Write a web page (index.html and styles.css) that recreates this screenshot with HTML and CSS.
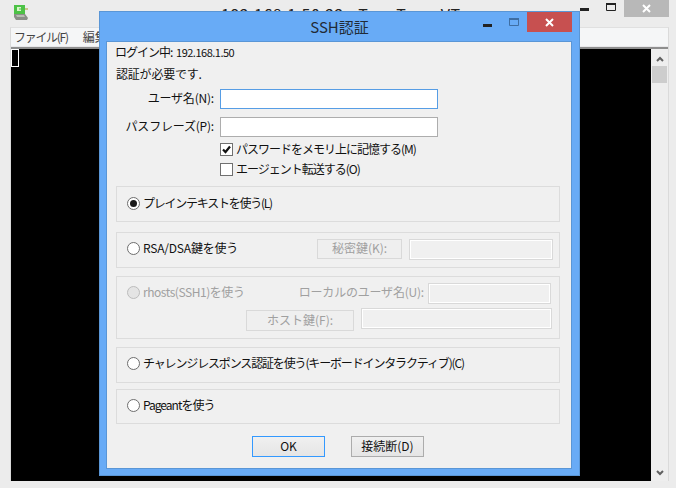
FILE: index.html
```html
<!DOCTYPE html>
<html lang="ja">
<head>
<meta charset="utf-8">
<title>SSH認証</title>
<link rel="stylesheet" href="styles.css">
</head>
<body>
<div class="desktop">
  <header class="term-titlebar">
    <svg class="app-icon" width="16" height="16" viewBox="0 0 16 16"><path d="M1 0h11v9H1z" fill="#4cc246"/><path d="M4 2h4v1.500H6v1h2V6H4z" fill="#d8f4c8"/><path d="M12 3h3v2h-3z" fill="#c9c48a"/><path d="M1 9h11l3 4-1 2H3l-2-3z" fill="#8a8f88"/><path d="M3 10h8l1 2H4z" fill="#b8bcb4"/></svg>
    <span class="term-title">192.168.1.50:22 - Tera Term VT</span>
    <div class="term-controls">
      <svg class="tc-min" width="9" height="3" viewBox="0 0 9 3"><rect width="9" height="3" fill="#222"/></svg>
      <svg class="tc-max" width="10" height="8" viewBox="0 0 10 8"><path d="M.5.5h9v7h-9z" fill="none" stroke="#222"/><rect x="0" y="0" width="10" height="2" fill="#222"/></svg>
      <div class="tc-close"><svg width="9" height="9" viewBox="0 0 9 9"><path d="M1 1l7 7M8 1L1 8" stroke="#fff" stroke-width="2"/></svg></div>
    </div>
  </header>
  <div class="term-body">
    <nav class="menu"><span class="m-file">ファイル(F)</span><span class="m-edit">編集(E)</span></nav>
    <div class="screen-row">
      <div class="screen"><div class="cursor"></div></div>
      <div class="scrollbar">
        <svg width="8" height="6" viewBox="0 0 8 6"><path d="M1 5l3-3 3 3" fill="none" stroke="#606060" stroke-width="2"/></svg>
        <div class="thumb"></div>
        <div class="track"></div>
        <svg width="8" height="6" viewBox="0 0 8 6"><path d="M1 1l3 3 3-3" fill="none" stroke="#606060" stroke-width="2"/></svg>
      </div>
    </div>
  </div>

  <section class="dialog">
    <div class="dlg-title">
      <span class="dlg-title-text">SSH認証</span>
      <svg class="d-min" width="9" height="3" viewBox="0 0 9 3"><rect width="9" height="3" fill="#222"/></svg>
      <svg class="d-max" width="10" height="8" viewBox="0 0 10 8"><path d="M.5.5h9v7h-9z" fill="none" stroke="#3f6ea3"/><rect width="10" height="2" fill="#3f6ea3"/></svg>
      <div class="d-close"><svg width="9" height="9" viewBox="0 0 9 9"><path d="M1 1l7 7M8 1L1 8" stroke="#fff" stroke-width="2"/></svg></div>
    </div>
    <div class="client">
      <p class="login"><span class="login-label">ログイン中:</span> <span class="login-ip">192.168.1.50</span></p>
      <p class="need">認証が必要です.</p>
      <div class="field first"><label class="l-user">ユーザ名(N):</label><div class="input focus"></div></div>
      <div class="field"><label>パスフレーズ(P):</label><div class="input"></div></div>
      <div class="check one"><span class="box"><svg width="11" height="11" viewBox="0 0 11 11"><path d="M2 5.500l2.500 2.500L9 2.500" fill="none" stroke="#111" stroke-width="2.200"/></svg></span><span class="t-tight">パスワードをメモリ上に記憶する(M)</span></div>
      <div class="check two"><span class="box"></span><span class="t-tight">エージェント転送する(O)</span></div>

      <div class="group g-plain"><div class="radio"><span class="dot on"></span><span class="rt t-plain">プレインテキストを使う(L)</span></div></div>
      <div class="group g-rsa">
        <div class="radio"><span class="dot"></span><span class="rt t-rsa">RSA/DSA鍵を使う</span></div>
        <div class="btn dis key-btn">秘密鍵(K):</div>
        <div class="dis-input key-input"></div>
      </div>
      <div class="group g-rhosts">
        <div class="rh-row">
          <div class="radio off"><span class="dot"></span><span class="rt t-rh">rhosts(SSH1)を使う</span></div>
          <span class="rh-label">ローカルのユーザ名(U):</span>
          <div class="dis-input rh-user"></div>
        </div>
        <div class="rh-row two">
          <div class="btn dis host-btn">ホスト鍵(F):</div>
          <div class="dis-input rh-host"></div>
        </div>
      </div>
      <div class="group g-chal"><div class="radio"><span class="dot"></span><span class="rt t-chal">チャレンジレスポンス認証を使う(キーボードインタラクティブ)(C)</span></div></div>
      <div class="group g-page"><div class="radio"><span class="dot"></span><span class="t-tight">Pageantを使う</span></div></div>
      <div class="actions">
        <div class="btn default">OK</div>
        <div class="btn normal">接続断(D)</div>
      </div>
    </div>
  </section>
</div>
</body>
</html>
```

FILE: styles.css
```css
* { box-sizing: border-box; }
html, body { margin: 0; padding: 0; }
body { width: 676px; height: 488px; overflow: hidden; background: #ececec; font-family: "Noto Sans CJK JP", "Noto Sans", sans-serif; font-size: 12px; line-height: 14px; color: #111; }
p { margin: 0; }
.desktop { position: relative; width: 676px; height: 488px; }

.term-titlebar { height: 27px; position: relative; }
.app-icon { position: absolute; left: 13px; top: 5px; }
.term-title { position: absolute; left: 221px; top: 5px; font-size: 16px; line-height: 18px; letter-spacing: 0.5px; color: #222; white-space: nowrap; }
.term-controls { position: absolute; left: 580px; top: 0; width: 92px; height: 17px; }
.tc-min { position: absolute; left: 0; top: 8px; }
.tc-max { position: absolute; left: 26px; top: 3px; }
.tc-close { position: absolute; left: 44px; top: 0; width: 45px; height: 17px; background: #b8b8b8; display: flex; align-items: center; justify-content: center; }

.term-body { margin-left: 10px; width: 659px; height: 454px; border: 1px solid #dadada; border-top-color: #e0e0e0; border-bottom: 0; }
.menu { height: 19px; background: #f5f6f7; border-bottom: 1px solid #e8e8ea; display: flex; gap: 15px; padding: 2px 3px 0; color: #444; font-size: 12px; }
.m-file { letter-spacing: -1.3px; }
.screen-row { display: flex; height: 434px; border-top: 2px solid #8e8e8e; }
.screen { width: 640px; height: 432px; background: #000; }
.cursor { width: 8px; height: 18px; border: 1px solid #fff; }
.scrollbar { flex: 1; height: 432px; background: #eeeeee; display: flex; flex-direction: column; align-items: center; padding: 7px 0 5px; }
.thumb { width: 15px; height: 17px; margin-top: 4px; background: #cdcdcd; }
.track { flex: 1; }

.dialog { position: absolute; left: 99px; top: 11px; width: 481px; height: 465px; background: #68abf6; border: 1px solid #5a96d6; display: flex; flex-direction: column; }
.dlg-title { height: 29px; position: relative; flex: none; }
.dlg-title-text { display: block; text-align: center; padding-top: 7px; font-size: 15px; line-height: 16px; color: #222b36; }
.d-min { position: absolute; left: 383px; top: 12px; }
.d-max { position: absolute; left: 409px; top: 6px; }
.d-close { position: absolute; left: 427px; top: 0; width: 45px; height: 20px; background: #c75050; display: flex; align-items: center; justify-content: center; }

.client { margin-left: 6px; width: 466px; height: 428px; background: #f0f0f0; border: 1px solid #5a96d6; padding: 0 11px 0 9px; display: flex; flex-direction: column; }
.login { margin-top: 3px; height: 14px; margin-left: -1px; white-space: nowrap; }
.login-label { letter-spacing: -1px; }
.login-ip { font-size: 11px; letter-spacing: -0.5px; margin-left: 1px; }
.need { margin-top: 8px; height: 14px; letter-spacing: -0.2px; }

.field { display: flex; align-items: center; height: 20px; margin-top: 8px; }
.field label { width: 98px; text-align: right; white-space: nowrap; letter-spacing: -0.2px; padding-bottom: 2px; }
.input { width: 218px; height: 20px; margin-left: 6px; background: #fff; border: 1px solid #adadad; }
.input.focus { border-color: #569de5; }

.check { display: flex; align-items: center; height: 14px; margin-left: 104px; margin-top: 5px; white-space: nowrap; }
.check.two { margin-top: 6px; }
.t-tight { letter-spacing: -1px; }
.box { width: 13px; height: 13px; margin-right: 3px; background: #fff; border: 1px solid #707070; display: flex; align-items: center; justify-content: center; flex: none; }

.group { border: 1px solid #dcdcdc; flex: none; }
.g-plain, .g-rsa, .g-chal, .g-page { height: 36px; display: flex; align-items: center; padding-left: 10px; }
.g-plain { margin-top: 10px; }
.g-rsa { margin-top: 10px; }
.g-rhosts { margin-top: 8px; height: 63px; padding: 6px 7px 0 10px; }
.g-chal { margin-top: 8px; }
.g-page { margin-top: 6px; height: 35px; }

.radio { display: flex; align-items: center; white-space: nowrap; height: 14px; }
.g-rsa .radio, .g-chal .radio, .g-page .radio { margin-bottom: 3px; }
.g-plain .radio { margin-bottom: 2px; }
.g-rhosts .radio { margin-bottom: 3px; }
.rt { padding-bottom: 1px; }
.t-plain { letter-spacing: -1.25px; }
.t-rsa { letter-spacing: -0.2px; }
.t-rh { letter-spacing: -0.45px; }
.t-chal { letter-spacing: -1.15px; }
.dot { width: 13px; height: 13px; margin-right: 3px; border-radius: 50%; background: #fff; border: 1px solid #6e6e6e; display: flex; align-items: center; justify-content: center; flex: none; }
.dot.on::after { content: ""; width: 7px; height: 7px; border-radius: 50%; background: #1a1a1a; }
.radio.off { color: #a0a0a0; }
.radio.off .dot { background: #e4e4e4; border-color: #bcbcbc; }

.btn { height: 21px; display: flex; align-items: center; justify-content: center; white-space: nowrap; padding-bottom: 1px; }
.btn.dis { background: #efefef; border: 1px solid #d9d9d9; color: #a0a0a0; }
.key-btn { width: 85px; height: 20px; margin-left: auto; margin-bottom: 3px; }
.dis-input { height: 21px; background: #f0f0f0; border: 1px solid #d9d9d9; box-shadow: inset 0 0 0 1px #fff; }
.key-input { width: 144px; margin: 0 6px 1px 7px; }
.rh-row { display: flex; align-items: center; height: 21px; }
.rh-row.two { justify-content: flex-end; margin-top: 5px; }
.rh-label { margin-left: auto; color: #a0a0a0; white-space: nowrap; letter-spacing: -0.2px; margin-bottom: 3px; }
.rh-user { width: 123px; margin-left: 4px; margin-right: 1px; }
.rh-host { width: 191px; margin: -2px 0 0 7px; }
.host-btn { width: 108px; margin-top: 1px; }

.actions { display: flex; gap: 26px; margin-top: 12px; padding-left: 136px; }
.actions .btn { width: 73px; height: 21px; }
.btn.default { border: 1px solid #3399ff; background: linear-gradient(#f0f0f0, #e5e5e5); }
.btn.normal { border: 1px solid #acacac; background: linear-gradient(#f0f0f0, #e5e5e5); }
```
